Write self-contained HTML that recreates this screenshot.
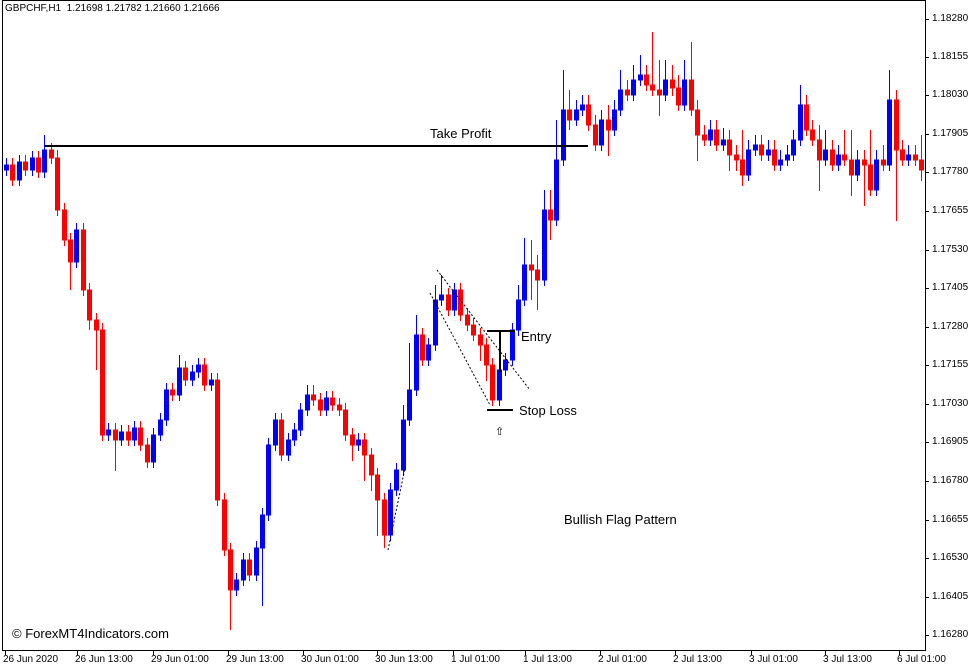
<!DOCTYPE html>
<html><head><meta charset="utf-8"><style>
html,body{margin:0;padding:0;background:#fff;}
body{width:977px;height:670px;position:relative;overflow:hidden;font-family:"Liberation Sans",sans-serif;}
.t{position:absolute;font-size:10px;color:#000;white-space:nowrap;}
.p{left:932px;}
.d{top:654px;}
</style></head><body>
<svg width="977" height="670" style="position:absolute;left:0;top:0" xmlns="http://www.w3.org/2000/svg">
<rect x="2.5" y="0.5" width="923" height="650" fill="none" stroke="#000" stroke-width="1"/>
<path fill="#0000ff" stroke="#0000ff" stroke-width="1" d="M6.5 158V176M4.5 165h4v5h-4zM19.5 155V186M17.5 162h4v18h-4zM32.5 151V176M30.5 158h4v12h-4zM44.5 135V178M42.5 150h4v22h-4zM76.5 223V268M74.5 230h4v32h-4zM108.5 423V441M106.5 430h4v5h-4zM121.5 425V446M119.5 432h4v8h-4zM134.5 421V446M132.5 428h4v12h-4zM153.5 428V468M151.5 435h4v27h-4zM160.5 413V441M158.5 420h4v15h-4zM166.5 383V426M164.5 390h4v30h-4zM179.5 355V401M177.5 368h4v27h-4zM192.5 365V386M190.5 372h4v8h-4zM198.5 358V378M196.5 365h4v7h-4zM211.5 373V391M209.5 380h4v5h-4zM236.5 573V596M234.5 580h4v10h-4zM243.5 553V586M241.5 560h4v20h-4zM256.5 541V581M254.5 548h4v27h-4zM262.5 508V606M260.5 515h4v33h-4zM268.5 438V521M266.5 445h4v70h-4zM275.5 413V451M273.5 420h4v25h-4zM288.5 433V461M286.5 440h4v15h-4zM294.5 423V446M292.5 430h4v10h-4zM300.5 403V436M298.5 410h4v20h-4zM307.5 385V416M305.5 395h4v15h-4zM326.5 391V416M324.5 398h4v12h-4zM358.5 433V451M356.5 440h4v5h-4zM390.5 483V541M388.5 490h4v45h-4zM396.5 463V496M394.5 470h4v20h-4zM403.5 405V476M401.5 420h4v50h-4zM409.5 343V426M407.5 390h4v30h-4zM416.5 315V396M414.5 335h4v55h-4zM428.5 338V366M426.5 345h4v15h-4zM435.5 285V351M433.5 300h4v45h-4zM441.5 275V306M439.5 295h4v5h-4zM454.5 283V316M452.5 290h4v20h-4zM499.5 363V406M497.5 370h4v30h-4zM505.5 353V376M503.5 360h4v10h-4zM512.5 323V366M510.5 330h4v30h-4zM518.5 285V336M516.5 300h4v30h-4zM524.5 238V306M522.5 265h4v35h-4zM544.5 190V286M542.5 210h4v70h-4zM556.5 120V226M554.5 160h4v60h-4zM563.5 70V166M561.5 110h4v50h-4zM576.5 100V126M574.5 110h4v10h-4zM582.5 95V116M580.5 105h4v5h-4zM601.5 110V151M599.5 120h4v25h-4zM614.5 100V136M612.5 110h4v20h-4zM620.5 70V116M618.5 90h4v20h-4zM633.5 65V101M631.5 80h4v15h-4zM640.5 55V86M638.5 75h4v5h-4zM665.5 60V101M663.5 80h4v15h-4zM684.5 60V111M682.5 80h4v25h-4zM710.5 120V146M708.5 130h4v10h-4zM723.5 128V151M721.5 140h4v5h-4zM748.5 140V181M746.5 150h4v25h-4zM755.5 135V156M753.5 145h4v5h-4zM768.5 140V161M766.5 150h4v5h-4zM780.5 150V171M778.5 160h4v5h-4zM787.5 145V166M785.5 155h4v5h-4zM793.5 130V161M791.5 140h4v15h-4zM800.5 85V146M798.5 105h4v35h-4zM825.5 130V166M823.5 150h4v10h-4zM838.5 145V171M836.5 155h4v10h-4zM857.5 150V181M855.5 160h4v15h-4zM876.5 150V196M874.5 160h4v30h-4zM889.5 70V171M887.5 100h4v65h-4zM908.5 145V166M906.5 155h4v5h-4z"/>
<path fill="#ff0000" stroke="#ff0000" stroke-width="1" d="M12.5 158V186M10.5 165h4v15h-4zM25.5 155V176M23.5 162h4v8h-4zM38.5 151V178M36.5 158h4v14h-4zM51.5 143V164M49.5 150h4v8h-4zM57.5 150V216M55.5 158h4v52h-4zM64.5 203V246M62.5 210h4v30h-4zM70.5 233V290M68.5 240h4v22h-4zM83.5 223V296M81.5 230h4v60h-4zM89.5 283V330M87.5 290h4v30h-4zM96.5 313V370M94.5 320h4v10h-4zM102.5 323V441M100.5 330h4v105h-4zM115.5 423V471M113.5 430h4v10h-4zM128.5 425V446M126.5 432h4v8h-4zM140.5 421V451M138.5 428h4v17h-4zM147.5 438V468M145.5 445h4v17h-4zM172.5 383V401M170.5 390h4v5h-4zM185.5 361V386M183.5 368h4v12h-4zM204.5 358V391M202.5 365h4v20h-4zM217.5 373V506M215.5 380h4v120h-4zM224.5 493V556M222.5 500h4v50h-4zM230.5 543V630M228.5 550h4v40h-4zM249.5 553V581M247.5 560h4v15h-4zM281.5 413V461M279.5 420h4v35h-4zM313.5 385V406M311.5 395h4v5h-4zM320.5 393V416M318.5 400h4v10h-4zM332.5 391V411M330.5 398h4v7h-4zM339.5 398V416M337.5 405h4v5h-4zM345.5 403V441M343.5 410h4v25h-4zM352.5 428V461M350.5 435h4v10h-4zM364.5 433V481M362.5 440h4v15h-4zM371.5 448V491M369.5 455h4v20h-4zM377.5 468V536M375.5 475h4v25h-4zM384.5 493V548M382.5 500h4v35h-4zM422.5 328V366M420.5 335h4v25h-4zM448.5 288V316M446.5 295h4v15h-4zM460.5 283V321M458.5 290h4v25h-4zM467.5 308V331M465.5 315h4v10h-4zM473.5 318V341M471.5 325h4v10h-4zM480.5 328V361M478.5 335h4v10h-4zM486.5 338V381M484.5 345h4v20h-4zM492.5 358V406M490.5 365h4v35h-4zM531.5 240V300M529.5 265h4v5h-4zM537.5 255V310M535.5 270h4v10h-4zM550.5 190V240M548.5 210h4v10h-4zM569.5 90V130M567.5 110h4v10h-4zM588.5 95V131M586.5 105h4v20h-4zM595.5 115V151M593.5 125h4v20h-4zM608.5 105V156M606.5 120h4v10h-4zM627.5 80V101M625.5 90h4v5h-4zM646.5 65V91M644.5 75h4v10h-4zM652.5 32V96M650.5 85h4v5h-4zM659.5 60V116M657.5 90h4v5h-4zM672.5 65V96M670.5 80h4v8h-4zM678.5 75V111M676.5 88h4v17h-4zM691.5 42V116M689.5 80h4v30h-4zM697.5 100V161M695.5 110h4v25h-4zM704.5 125V146M702.5 135h4v5h-4zM716.5 120V151M714.5 130h4v15h-4zM729.5 130V171M727.5 140h4v15h-4zM736.5 145V171M734.5 155h4v5h-4zM742.5 130V186M740.5 160h4v15h-4zM761.5 135V161M759.5 145h4v10h-4zM774.5 140V171M772.5 150h4v15h-4zM806.5 95V136M804.5 105h4v25h-4zM812.5 120V146M810.5 130h4v10h-4zM819.5 125V191M817.5 140h4v20h-4zM832.5 140V171M830.5 150h4v15h-4zM844.5 130V166M842.5 155h4v5h-4zM851.5 130V196M849.5 160h4v15h-4zM864.5 150V206M862.5 160h4v5h-4zM870.5 130V196M868.5 165h4v25h-4zM883.5 145V171M881.5 160h4v5h-4zM896.5 90V221M894.5 100h4v50h-4zM902.5 140V166M900.5 150h4v10h-4zM915.5 145V166M913.5 155h4v5h-4zM921.5 135V181M919.5 160h4v10h-4z"/>
<line x1="45" y1="146" x2="588" y2="146" stroke="#000" stroke-width="2"/>
<line x1="487" y1="331" x2="515" y2="331" stroke="#000" stroke-width="2"/>
<line x1="500" y1="331" x2="500" y2="372" stroke="#000" stroke-width="2"/>
<line x1="487" y1="410" x2="513" y2="410" stroke="#000" stroke-width="2"/>
<line x1="437" y1="270" x2="530" y2="390" stroke="#000" stroke-width="1" stroke-dasharray="2,2"/>
<line x1="430" y1="293" x2="490" y2="405" stroke="#000" stroke-width="1" stroke-dasharray="2,2"/>
<line x1="388" y1="550" x2="405" y2="468" stroke="#000" stroke-width="1" stroke-dasharray="2,2"/>
<path stroke="#000" stroke-width="1" d="M926 19.5h3M926 57.5h3M926 95.5h3M926 134.5h3M926 172.5h3M926 211.5h3M926 250.5h3M926 288.5h3M926 327.5h3M926 365.5h3M926 404.5h3M926 442.5h3M926 481.5h3M926 520.5h3M926 558.5h3M926 597.5h3M926 635.5h3M5.5 651v4M77.5 651v4M153.5 651v4M228.5 651v4M303.5 651v4M377.5 651v4M453.5 651v4M525.5 651v4M600.5 651v4M675.5 651v4M751.5 651v4M825.5 651v4M899.5 651v4"/>
</svg>
<div class="t" style="left:5px;top:3px">GBPCHF,H1&nbsp; 1.21698 1.21782 1.21660 1.21666</div>
<div class="t" style="left:430px;top:126px;font-size:13px">Take Profit</div>
<div class="t" style="left:521px;top:329px;font-size:13px">Entry</div>
<div class="t" style="left:519px;top:403px;font-size:13px">Stop Loss</div>
<div class="t" style="left:495px;top:425px;font-size:11px">⇧</div>
<div class="t" style="left:564px;top:512px;font-size:13px">Bullish Flag Pattern</div>
<div class="t" style="left:12px;top:626px;font-size:13px">© ForexMT4Indicators.com</div>
<div class="t p" style="top:13px">1.18280</div>
<div class="t p" style="top:51px">1.18155</div>
<div class="t p" style="top:89px">1.18030</div>
<div class="t p" style="top:128px">1.17905</div>
<div class="t p" style="top:166px">1.17780</div>
<div class="t p" style="top:205px">1.17655</div>
<div class="t p" style="top:244px">1.17530</div>
<div class="t p" style="top:282px">1.17405</div>
<div class="t p" style="top:321px">1.17280</div>
<div class="t p" style="top:359px">1.17155</div>
<div class="t p" style="top:398px">1.17030</div>
<div class="t p" style="top:436px">1.16905</div>
<div class="t p" style="top:475px">1.16780</div>
<div class="t p" style="top:514px">1.16655</div>
<div class="t p" style="top:552px">1.16530</div>
<div class="t p" style="top:591px">1.16405</div>
<div class="t p" style="top:629px">1.16280</div>
<div class="t d" style="left:3px">26 Jun 2020</div>
<div class="t d" style="left:75px">26 Jun 13:00</div>
<div class="t d" style="left:151px">29 Jun 01:00</div>
<div class="t d" style="left:226px">29 Jun 13:00</div>
<div class="t d" style="left:301px">30 Jun 01:00</div>
<div class="t d" style="left:375px">30 Jun 13:00</div>
<div class="t d" style="left:451px">1 Jul 01:00</div>
<div class="t d" style="left:523px">1 Jul 13:00</div>
<div class="t d" style="left:598px">2 Jul 01:00</div>
<div class="t d" style="left:673px">2 Jul 13:00</div>
<div class="t d" style="left:749px">3 Jul 01:00</div>
<div class="t d" style="left:823px">3 Jul 13:00</div>
<div class="t d" style="left:897px">6 Jul 01:00</div>
</body></html>
